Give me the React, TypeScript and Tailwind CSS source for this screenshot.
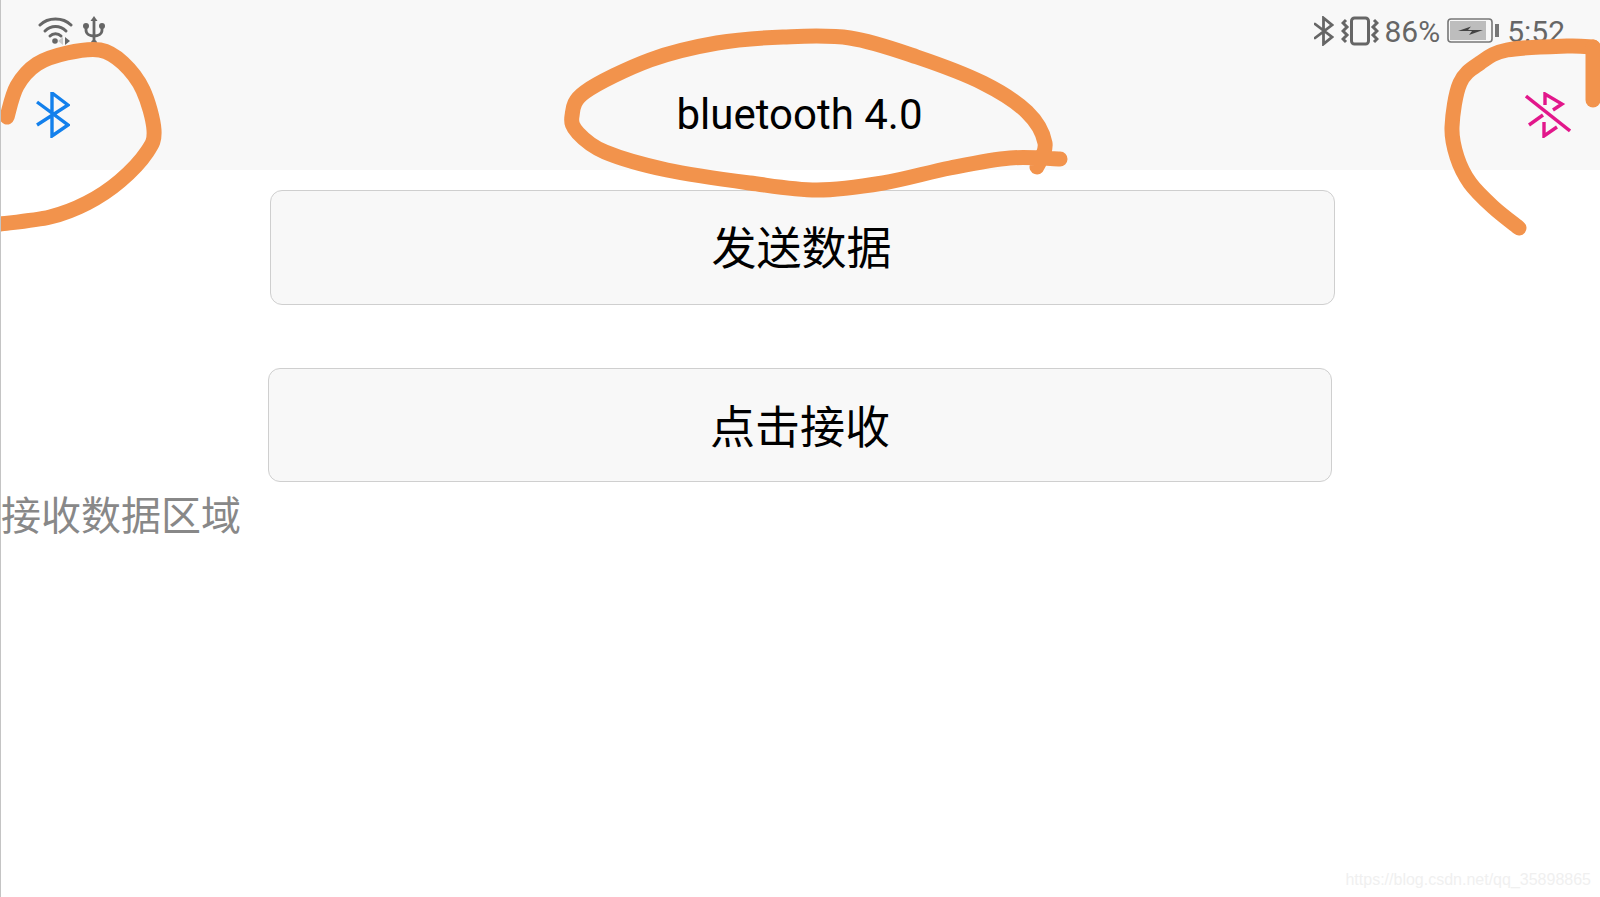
const cjk = "font-['Noto_Sans_CJK_SC','Noto_Sans',sans-serif]";

// smooth line through the hand-drawn points (catmull-rom to bezier)
function smooth(pts: number[][]) {
  let d = `M${pts[0][0]} ${pts[0][1]}`;
  for (let i = 0; i < pts.length - 1; i++) {
    const p0 = pts[i - 1] || pts[i];
    const p1 = pts[i];
    const p2 = pts[i + 1];
    const p3 = pts[i + 2] || p2;
    d += ` C${p1[0] + (p2[0] - p0[0]) / 6} ${p1[1] + (p2[1] - p0[1]) / 6} ${p2[0] - (p3[0] - p1[0]) / 6} ${p2[1] - (p3[1] - p1[1]) / 6} ${p2[0]} ${p2[1]}`;
  }
  return d;
}

const scribbles = [
  [[7,117],[17,86],[37,64],[67,53],[100,50],[123,63],[143,90],[154,130],[147,152],[120,181],[87,203],[50,217],[0,224]],
  [[1060,159],[1010,158],[950,168],[883,183],[817,190],[750,183],[667,170],[605,152],[578,133],[572,116],[585,92],[650,60],[717,43],[783,37],[850,38],[917,57],[983,83],[1027,112],[1045,143],[1037,167]],
  [[1593,47],[1567,46],[1507,50],[1480,63],[1460,83],[1452,127],[1457,157],[1470,183],[1493,207],[1519,228]],
  [[1593,100],[1593,47]],
];

function WifiIcon() {
  return (
    <svg width="36" height="30" viewBox="0 0 36 30" fill="none" stroke="#666" strokeWidth="3" strokeLinecap="round">
      <path d="M2 9C10 1 25 1 33 9" />
      <path d="M7 15C13 9 22 9 28 15" />
      <path d="M12 20C15 17 20 17 23 20" />
      <circle cx="17" cy="25" r="2.800" fill="#666" stroke="none" />
      <path d="M27 21l5 4-5 4z" fill="#666" stroke="none" />
      <path d="M25 21l-5 4 5 4z" fill="#ccc" stroke="none" />
    </svg>
  );
}

function UsbIcon() {
  return (
    <svg width="22" height="30" viewBox="0 0 22 30" fill="none" stroke="#666" strokeWidth="2.800">
      <path d="M11 3V27" />
      <path d="M11 0l3.500 5h-7z" fill="#666" stroke="none" />
      <path d="M3 10V14C3 18 7 20 11 20C15 20 19 18 19 14V10" />
      <circle cx="3" cy="10" r="3" fill="#666" stroke="none" />
      <circle cx="19" cy="10" r="3" fill="#666" stroke="none" />
      <circle cx="11" cy="27" r="3" fill="#666" stroke="none" />
    </svg>
  );
}

function SmallBluetooth() {
  return (
    <svg width="20" height="30" viewBox="0 0 20 30" fill="none" stroke="#666" strokeWidth="2.800" strokeLinecap="round">
      <path d="M1 8L18 21L9.500 28V2L18 9L1 22" />
    </svg>
  );
}

function VibrateIcon() {
  return (
    <svg width="38" height="30" viewBox="0 0 38 30" fill="none" stroke="#666" strokeWidth="3">
      <rect x="10.500" y="2" width="17" height="26" rx="3" />
      <path d="M5 4L2 7L6 11L2 15L6 19L2 23L5 26" />
      <path d="M33 4L36 7L32 11L36 15L32 19L36 23L33 26" />
    </svg>
  );
}

function BatteryIcon() {
  return (
    <svg width="54" height="26" viewBox="0 0 54 26" fill="none">
      <rect x="1" y="1" width="44" height="23" rx="3" stroke="#777" strokeWidth="1.600" />
      <rect x="3" y="3" width="36" height="19" fill="#bdbdbd" />
      <path d="M11 13L24 8.500L21 12H36L22 17L25 13Z" fill="#444" />
      <rect x="48" y="6" width="4" height="13" fill="#777" />
    </svg>
  );
}

function BluetoothOn() {
  return (
    <svg width="34" height="46" viewBox="0 0 34 46" fill="none" stroke="#1380ec" strokeWidth="3.400">
      <path d="M1 10L32 33L16 44V1L32 13L1 33" />
    </svg>
  );
}

function BluetoothOff() {
  return (
    <svg width="46" height="46" viewBox="0 0 46 46" fill="none" stroke="#e2178b" strokeWidth="3.400">
      <path d="M1 4L45 39" />
      <path d="M20 13V2L37 12L28 18" />
      <path d="M4 33L18 23" />
      <path d="M19 30V44L32 35" />
    </svg>
  );
}

function ActionButton({ label, className }: { label: string; className: string }) {
  return (
    <button
      className={`flex items-center justify-center rounded-[12px] border border-[#cfcfcf] bg-[#f8f8f8] text-[45px] text-black ${cjk} ${className}`}
    >
      {label}
    </button>
  );
}

export default function App() {
  return (
    <div className="relative h-[897px] w-[1600px] overflow-hidden border-l border-[#c4c4c4] bg-white">
      <header className="h-[170px] bg-[#f8f8f8]">
        <div className="flex h-[62px] items-center justify-between pl-[37px] pr-[35px] font-['Roboto',sans-serif] text-[30px] text-[#666]">
          <div className="flex items-center gap-[9px]">
            <WifiIcon />
            <UsbIcon />
          </div>
          <div className="flex items-center">
            <SmallBluetooth />
            <span className="ml-[7px]"><VibrateIcon /></span>
            <span className="ml-[5px]">86%</span>
            <span className="ml-[7px]"><BatteryIcon /></span>
            <span className="ml-[6px]">5:52</span>
          </div>
        </div>
        <div className="flex h-[106px] items-center justify-between pl-[35px] pr-[29px]">
          <BluetoothOn />
          <h1 className="mb-[2px] ml-[4px] font-['Roboto',sans-serif] text-[42px] font-normal text-black">bluetooth 4.0</h1>
          <BluetoothOff />
        </div>
      </header>

      <main className="flex flex-col">
        <ActionButton label="发送数据" className="ml-[269px] mt-[20px] h-[115px] w-[1065px] pb-[3px] pr-[2px]" />
        <ActionButton label="点击接收" className="ml-[267px] mt-[63px] h-[114px] w-[1064px]" />
        <p className={`mt-[6px] text-[40px] leading-[50px] text-[#888] ${cjk}`}>接收数据区域</p>
      </main>

      <svg className="pointer-events-none absolute -left-px top-0" width="1600" height="897" fill="none" stroke="#f2934c" strokeWidth="15" strokeLinecap="round" strokeLinejoin="round">
        {scribbles.map((pts, i) => (
          <path d={smooth(pts)} key={i} />
        ))}
      </svg>

      <span className="absolute bottom-[5px] right-[9px] font-['Liberation_Sans',sans-serif] text-[16px] text-[#f0f0f0]">
        https://blog.csdn.net/qq_35898865
      </span>
    </div>
  );
}
